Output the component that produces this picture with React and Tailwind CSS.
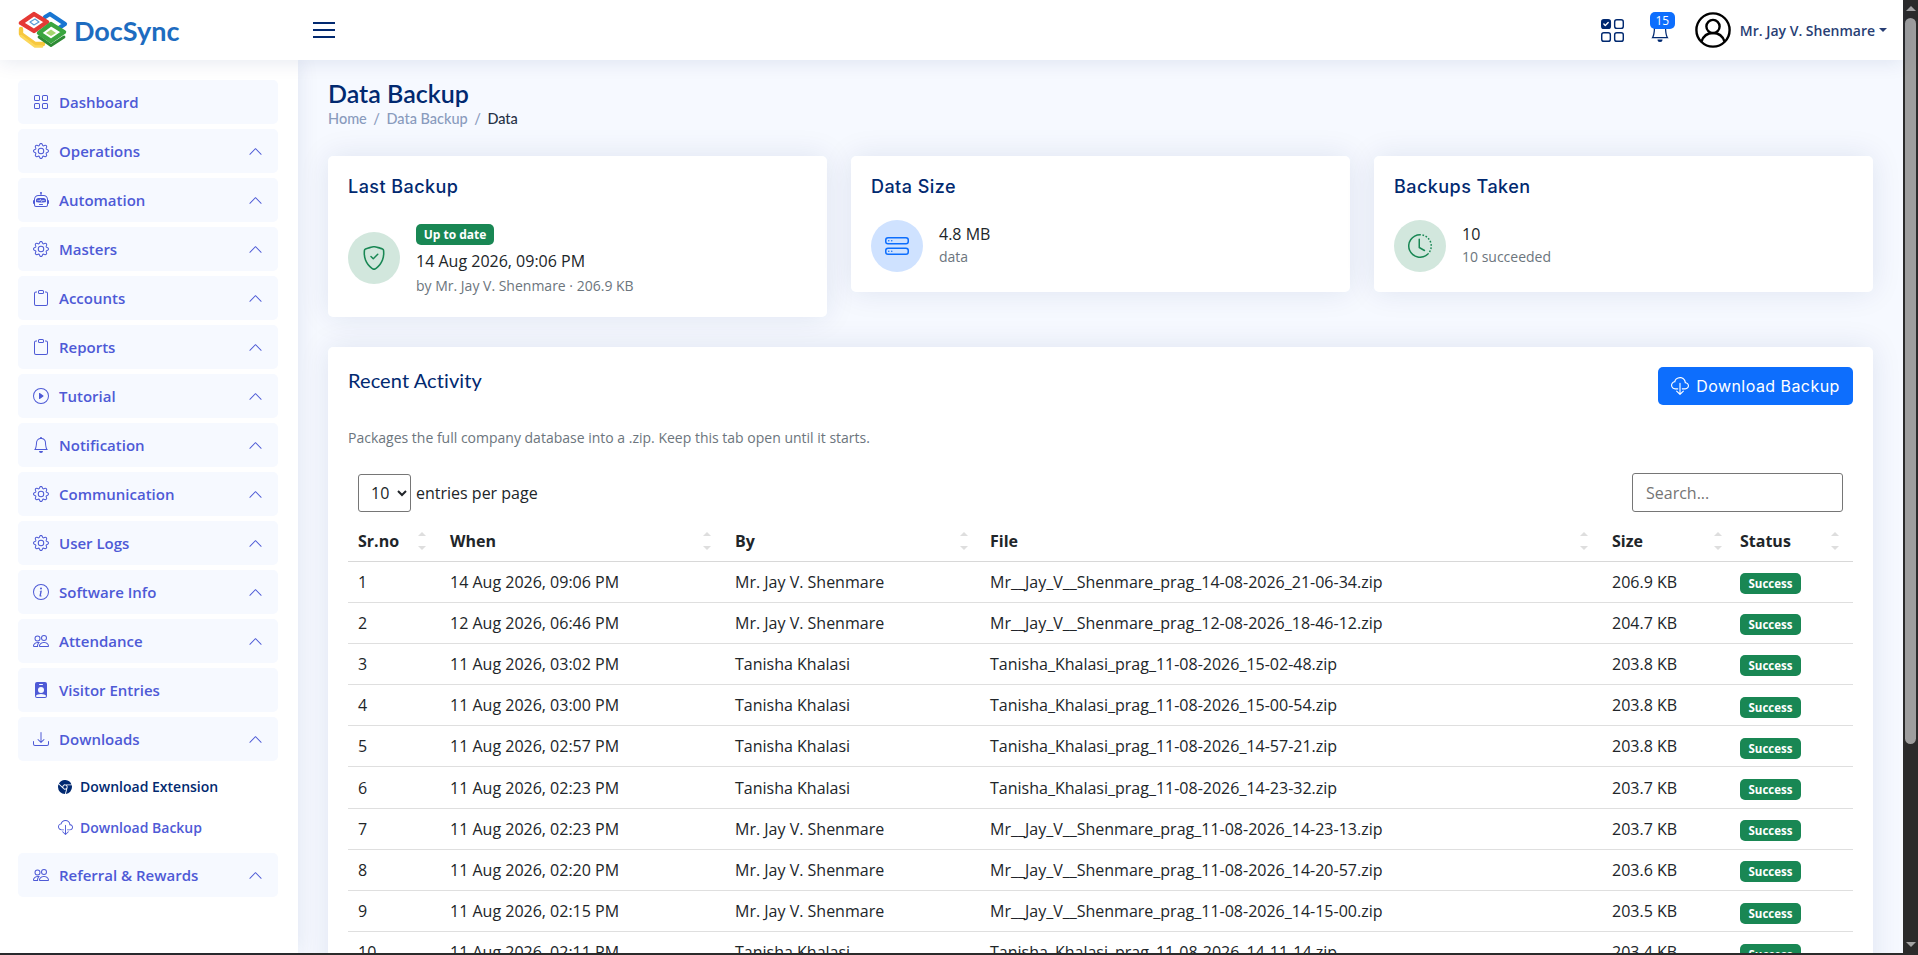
import {
  BsGrid,
  BsGear,
  BsRobot,
  BsClipboard,
  BsPlayCircle,
  BsBell,
  BsInfoCircle,
  BsPeople,
  BsPersonBadgeFill,
  BsDownload,
  BsChevronUp,
  BsBrowserChrome,
  BsCloudDownload,
  BsShieldCheck,
  BsHddStack,
  BsClockHistory,
  BsUiChecksGrid,
} from "react-icons/bs"

const navItems = [
  { label: "Dashboard", icon: BsGrid },
  { label: "Operations", icon: BsGear, arrow: true },
  { label: "Automation", icon: BsRobot, arrow: true },
  { label: "Masters", icon: BsGear, arrow: true },
  { label: "Accounts", icon: BsClipboard, arrow: true },
  { label: "Reports", icon: BsClipboard, arrow: true },
  { label: "Tutorial", icon: BsPlayCircle, arrow: true },
  { label: "Notification", icon: BsBell, arrow: true },
  { label: "Communication", icon: BsGear, arrow: true },
  { label: "User Logs", icon: BsGear, arrow: true },
  { label: "Software Info", icon: BsInfoCircle, arrow: true },
  { label: "Attendance", icon: BsPeople, arrow: true },
  { label: "Visitor Entries", icon: BsPersonBadgeFill },
  { label: "Downloads", icon: BsDownload, arrow: true },
]

const JAY = "Mr. Jay V. Shenmare"
const TANISHA = "Tanisha Khalasi"
const JAY_FILE = "Mr__Jay_V__Shenmare_prag_"
const TANISHA_FILE = "Tanisha_Khalasi_prag_"

const rows = [
  ["14 Aug 2026, 09:06 PM", JAY, JAY_FILE + "14-08-2026_21-06-34.zip", "206.9 KB"],
  ["12 Aug 2026, 06:46 PM", JAY, JAY_FILE + "12-08-2026_18-46-12.zip", "204.7 KB"],
  ["11 Aug 2026, 03:02 PM", TANISHA, TANISHA_FILE + "11-08-2026_15-02-48.zip", "203.8 KB"],
  ["11 Aug 2026, 03:00 PM", TANISHA, TANISHA_FILE + "11-08-2026_15-00-54.zip", "203.8 KB"],
  ["11 Aug 2026, 02:57 PM", TANISHA, TANISHA_FILE + "11-08-2026_14-57-21.zip", "203.8 KB"],
  ["11 Aug 2026, 02:23 PM", TANISHA, TANISHA_FILE + "11-08-2026_14-23-32.zip", "203.7 KB"],
  ["11 Aug 2026, 02:23 PM", JAY, JAY_FILE + "11-08-2026_14-23-13.zip", "203.7 KB"],
  ["11 Aug 2026, 02:20 PM", JAY, JAY_FILE + "11-08-2026_14-20-57.zip", "203.6 KB"],
  ["11 Aug 2026, 02:15 PM", JAY, JAY_FILE + "11-08-2026_14-15-00.zip", "203.5 KB"],
  ["11 Aug 2026, 02:11 PM", TANISHA, TANISHA_FILE + "11-08-2026_14-11-14.zip", "203.4 KB"],
]

const columns = [
  { label: "Sr.no", width: "w-[92px]", arrow: "mr-[14px]" },
  { label: "When", width: "w-[285px]", arrow: "mr-[14px]" },
  { label: "By", width: "w-[255px]", arrow: "mr-[12px]" },
  { label: "File", width: "w-[622px]", arrow: "mr-[14px]" },
  { label: "Size", width: "w-[128px]", arrow: "mr-[8px]" },
  { label: "Status", width: "w-[123px]", arrow: "mr-[14px]" },
]

const Logo = () => (
  <svg width="50" height="38" viewBox="0 0 50 38" fill="none" strokeLinejoin="round" strokeLinecap="round">
    {/* yellow stack */}
    <path d="M3 18 L3 23 L17 33 L25 33" stroke="#f7c83f" strokeWidth="4.4" />
    <path d="M3 25 L17 35.5 L24 35.5" stroke="#fbd75b" strokeWidth="2.6" />
    {/* blue */}
    <path d="M27 6 L32 3 L47 13 L41 17" stroke="#1976d2" strokeWidth="4.2" />
    {/* red ring */}
    <path d="M16 3 L29 11 L16 20 L3 12 Z" stroke="#e53935" strokeWidth="4.4" />
    <path d="M12 11 L17 8 L21 11 L16 14 Z" stroke="#5b9bd5" strokeWidth="1.2" />
    {/* green ring */}
    <path d="M33 13 L46 21 L33 30 L21 22 Z" stroke="#3aa53f" strokeWidth="4.4" fill="#fff" />
    <path d="M33 18.5 L38 22 L33 25 L28 22 Z" fill="#a5d66f" />
    <path d="M21 26 L33 34.5 L46 26" stroke="#2e8b34" strokeWidth="2.8" />
  </svg>
)

const UserIcon = () => (
  <svg width="36" height="36" viewBox="0 0 36 36" fill="none" stroke="#000" strokeWidth="2.4" className="ml-[20px]">
    <circle cx="18" cy="18" r="16.6" />
    <circle cx="18" cy="14.5" r="6.6" />
    <path d="M6.5 29.5c2-6 6.5-8.5 11.5-8.5s9.5 2.5 11.5 8.5" />
  </svg>
)

const Header = () => (
  <header className="h-[60px] shrink-0 bg-white flex items-center shadow-[0_2px_20px_rgba(1,41,112,0.1)] relative z-20">
    <div className="w-[313px] flex items-center pl-[18px] gap-[6px]">
      <Logo />
      <span className="font-['Lato'] text-[27px] font-bold text-[#1d6cc0] leading-none">DocSync</span>
    </div>
    <button className="w-[22px] flex flex-col gap-[5px]">
      <span className="h-[2px] bg-[#012970]" />
      <span className="h-[2px] bg-[#012970]" />
      <span className="h-[2px] bg-[#012970]" />
    </button>
    <div className="ml-auto flex items-center pr-[16px]">
      <BsUiChecksGrid className="text-[#012970] text-[23px]" />
      <div className="relative ml-[26px] w-[25px] h-[36px] flex items-end">
        <BsBell className="text-[#012970] text-[20px] mb-[6px]" />
        <span className="absolute top-0 left-0 w-[25px] h-[17px] rounded-[5px] bg-[#0d6efd] text-white text-[12px] leading-[17px] text-center">15</span>
      </div>
      <UserIcon />
      <span className="ml-[9px] text-[14px] font-semibold text-[#283e74]">{JAY}</span>
      <span className="ml-[4px] border-x-[4px] border-x-transparent border-t-[4px] border-t-[#283e74]" />
    </div>
  </header>
)

const NavRow = ({ item }) => {
  const Icon = item.icon
  return (
    <div className="h-[44px] rounded-[5px] bg-[#f6f9ff] flex items-center pl-[15px] pr-[15px] text-[#4e5ad6]">
      <Icon className="text-[16px] w-[16px] shrink-0" />
      <span className="ml-[10px] text-[15px] font-semibold">{item.label}</span>
      {item.arrow && <BsChevronUp className="ml-auto text-[15px]" />}
    </div>
  )
}

const Sidebar = () => (
  <aside className="w-[298px] shrink-0 bg-white pl-[18px] pr-[20px] pt-[20px] flex flex-col gap-[5px] shadow-[0_0_20px_rgba(1,41,112,0.1)] z-10">
    {navItems.map((item) => (
      <NavRow key={item.label} item={item} />
    ))}
    <div className="flex flex-col">
      <div className="h-[41px] flex items-center pl-[40px] text-[14px] font-semibold text-[#012970]">
        <BsBrowserChrome className="text-[14px]" />
        <span className="ml-[8px]">Download Extension</span>
      </div>
      <div className="h-[41px] flex items-center pl-[40px] text-[14px] font-semibold text-[#4e5ad6]">
        <BsCloudDownload className="text-[15px]" />
        <span className="ml-[7px]">Download Backup</span>
      </div>
    </div>
    <NavRow item={{ label: "Referral & Rewards", icon: BsPeople, arrow: true }} />
  </aside>
)

const StatCard = ({ title, icon: Icon, iconClass, circleClass, textClass, children, heightClass }) => (
  <div className={`bg-white rounded-[5px] shadow-[0_0_30px_rgba(1,41,112,0.1)] px-[20px] pt-[19px] ${heightClass}`}>
    <h5 className="font-['Inter'] text-[18px] font-medium text-[#012970] tracking-[0.45px] leading-[24px]">{title}</h5>
    <div className="mt-[21px] flex items-start gap-[16px]">
      <div className={`w-[52px] h-[52px] rounded-full flex items-center justify-center ${circleClass}`}>
        <Icon className={`text-[24px] ${iconClass}`} />
      </div>
      <div className={textClass}>{children}</div>
    </div>
  </div>
)

const SortArrows = ({ className }) => (
  <span className={`ml-auto h-[18px] flex flex-col justify-between ${className}`}>
    <span className="border-x-[4px] border-x-transparent border-b-[4px] border-b-[#dedede]" />
    <span className="border-x-[4px] border-x-transparent border-t-[4px] border-t-[#dedede]" />
  </span>
)

const ActivityTable = () => (
  <table className="w-[1505px] table-fixed border-collapse text-[16px] text-[#212529]">
    <thead>
      <tr className="border-b border-[#d8d8d8] h-[42px]">
        {columns.map((col) => (
          <th key={col.label} className={`${col.width} p-0 pl-[10px] pt-[2px] text-left font-bold`}>
            <div className="flex items-center">
              {col.label}
              <SortArrows className={col.arrow} />
            </div>
          </th>
        ))}
      </tr>
    </thead>
    <tbody>
      {rows.map((row, i) => (
        <tr key={i} className="border-b border-[#dfdfdf] h-[41.2px]">
          <td className="p-0 pl-[10px]">{i + 1}</td>
          <td className="p-0 pl-[10px]">{row[0]}</td>
          <td className="p-0 pl-[10px]">{row[1]}</td>
          <td className="p-0 pl-[10px]">{row[2]}</td>
          <td className="p-0 pl-[10px]">{row[3]}</td>
          <td className="p-0 pl-[10px]">
            <span className="block mt-[4px] h-[21px] w-[61px] rounded-[5px] bg-[#198754] text-white text-[11.5px] font-bold leading-[21px] text-center">Success</span>
          </td>
        </tr>
      ))}
    </tbody>
  </table>
)

const Main = () => (
  <main className="flex-1 min-w-0 bg-[#f6f9ff] px-[30px] pt-[19px] overflow-hidden">
    <h1 className="font-['Lato'] text-[25px] font-semibold text-[#012970] leading-[28px]">Data Backup</h1>
    <div className="mt-[2px] flex items-center gap-[6.5px] font-['Lato'] text-[14.5px] font-medium leading-[20px] text-[#899bbd]">
      <span>Home</span>
      <span>/</span>
      <span>Data Backup</span>
      <span>/</span>
      <span className="text-[#273246]">Data</span>
    </div>

    <div className="mt-[27px] grid grid-cols-3 gap-[24px] items-start">
      <StatCard
        title="Last Backup"
        icon={BsShieldCheck}
        circleClass="bg-[#d2e7dd] mt-[12px]"
        iconClass="text-[#198754]"
        textClass="pt-[4px]"
        heightClass="h-[161px]"
      >
        <span className="block w-[78px] h-[21px] rounded-[5px] bg-[#198754] text-white text-[12px] font-bold leading-[21px] text-center">Up to date</span>
        <div className="mt-[4px] text-[16px] leading-[24px] text-[#212529]">14 Aug 2026, 09:06 PM</div>
        <div className="mt-[3px] text-[14px] leading-[20px] text-[#6c757d]">by {JAY} · 206.9 KB</div>
      </StatCard>
      <StatCard
        title="Data Size"
        icon={BsHddStack}
        circleClass="bg-[#cfe2ff]"
        iconClass="text-[#0d6efd]"
        textClass="pt-[2px]"
        heightClass="h-[136px]"
      >
        <div className="text-[16px] leading-[24px] text-[#212529]">4.8 MB</div>
        <div className="mt-[1px] text-[14px] leading-[20px] text-[#6c757d]">data</div>
      </StatCard>
      <StatCard
        title="Backups Taken"
        icon={BsClockHistory}
        circleClass="bg-[#d2e7dd]"
        iconClass="text-[#198754]"
        textClass="pt-[2px]"
        heightClass="h-[136px]"
      >
        <div className="text-[16px] leading-[24px] text-[#212529]">10</div>
        <div className="mt-[1px] text-[14px] leading-[20px] text-[#6c757d]">10 succeeded</div>
      </StatCard>
    </div>

    <section className="mt-[30px] bg-white rounded-[5px] shadow-[0_0_30px_rgba(1,41,112,0.1)] px-[20px] pt-[20px] pb-[20px]">
      <div className="flex items-start justify-between">
        <h5 className="-mt-[1px] font-['Lato'] text-[20px] font-normal text-[#012970] tracking-[0.1px] leading-[28px]">Recent Activity</h5>
        <button className="w-[195px] h-[38px] rounded-[5px] bg-[#0d6efd] text-white flex items-center justify-center gap-[7px] font-['Inter'] text-[16px] tracking-[0.45px]">
          <BsCloudDownload className="text-[18px]" />
          Download Backup
        </button>
      </div>
      <p className="mt-[23px] text-[14px] leading-[20px] text-[#6c757d]">
        Packages the full company database into a .zip. Keep this tab open until it starts.
      </p>
      <div className="mt-[25px] px-[10px] flex items-center justify-between">
        <div className="flex items-center gap-[5px] text-[16px] text-[#212529]">
          <select defaultValue="10" className="w-[53px] h-[38px] border border-[#767676] rounded-[3px] pl-[8px] text-[16px] bg-white">
            <option value="10">10</option>
            <option value="25">25</option>
          </select>
          <span>entries per page</span>
        </div>
        <input
          placeholder="Search..."
          className="w-[211px] h-[39px] border border-[#767676] rounded-[3px] px-[13px] text-[16px] placeholder:text-[#757575]"
        />
      </div>
      <div className="mt-[7px]">
        <ActivityTable />
      </div>
    </section>
  </main>
)

// browser chrome: the dark vertical scrollbar from the screenshot
const Scrollbar = () => (
  <div className="w-[15px] shrink-0 bg-[#2b2b2b] flex flex-col items-center pt-[6px] pb-[6px]">
    <span className="border-x-[5px] border-x-transparent border-b-[5px] border-b-[#a3a3a3]" />
    <span className="mt-[7px] w-[11px] h-[726px] rounded-[6px] bg-[#9e9e9e]" />
    <span className="mt-auto border-x-[5px] border-x-transparent border-t-[5px] border-t-[#a3a3a3]" />
  </div>
)

export default function App() {
  return (
    <div className="h-screen flex flex-col overflow-hidden font-['Open_Sans',sans-serif]">
      <div className="flex-1 min-h-0 flex">
        <div className="flex-1 min-w-0 flex flex-col">
          <Header />
          <div className="flex-1 min-h-0 flex">
            <Sidebar />
            <Main />
          </div>
        </div>
        <Scrollbar />
      </div>
      <div className="h-[2px] shrink-0 bg-[#2b2b2b]" />
    </div>
  )
}
